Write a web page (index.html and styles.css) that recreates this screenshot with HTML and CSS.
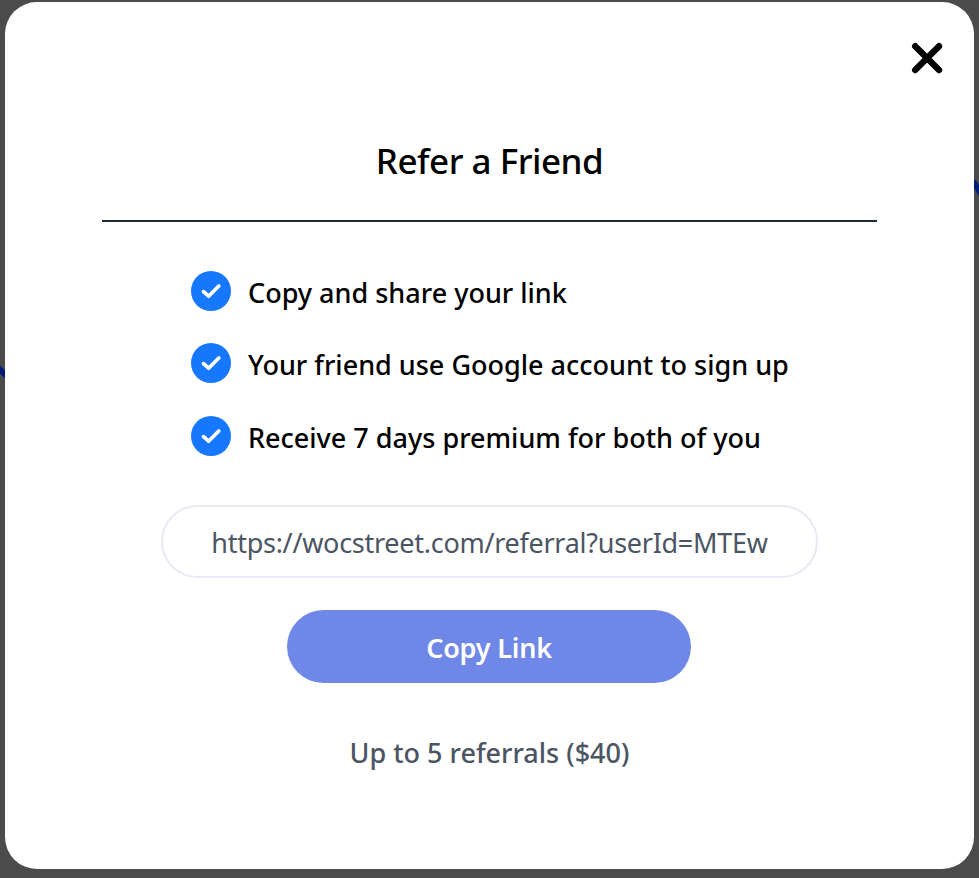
FILE: index.html
```html
<!DOCTYPE html>
<html lang="en">
<head>
<meta charset="utf-8">
<title>Refer a Friend</title>
<link rel="stylesheet" href="styles.css">
</head>
<body>
<svg class="backdrop" viewBox="0 0 979 878" aria-hidden="true">
  <path d="M0 0H979V4H0zM0 0H6V21H0z" fill="#4a4c4b"/>
  <path d="M-3 367L8 377M973 181L983 197" stroke="#001b78" stroke-width="6"/>
</svg>
<main class="modal">
  <button class="close" aria-label="Close">
    <svg viewBox="0 0 32 32"><path d="M4.200 4.200L28 28M28 4.200L4.200 28"/></svg>
  </button>
  <h1 class="title"><span>Refer a Friend</span></h1>
  <ul class="steps">
    <li><svg class="check" viewBox="0 0 40 40"><circle cx="20" cy="20" r="20"/><path d="M12.500 20.600L17.600 25.200L27.800 15"/></svg><span>Copy and share your link</span></li>
    <li><svg class="check" viewBox="0 0 40 40"><circle cx="20" cy="20" r="20"/><path d="M12.500 20.600L17.600 25.200L27.800 15"/></svg><span>Your friend use Google account to sign up</span></li>
    <li><svg class="check" viewBox="0 0 40 40"><circle cx="20" cy="20" r="20"/><path d="M12.500 20.600L17.600 25.200L27.800 15"/></svg><span>Receive 7 days premium for both of you</span></li>
  </ul>
  <div class="link"><span>https://wocstreet.com/referral?userId=MTEw</span></div>
  <button class="copy"><span>Copy Link</span></button>
  <p class="limit"><span>Up to 5 referrals ($40)</span></p>
</main>
</body>
</html>
```

FILE: styles.css
```css
* { box-sizing: border-box; }
body {
  margin: 0;
  height: 878px;
  padding: 2px 5px 9px;
  overflow: hidden;
  background: #4b4b4b;
  font-family: "Noto Sans", "Open Sans", sans-serif;
  font-size: 27px;
  font-weight: 500;
  line-height: 40px;
  color: #000;
}
button { border: 0; padding: 0; font: inherit; }
span { white-space: nowrap; }
.backdrop { position: absolute; left: 0; top: 0; width: 979px; height: 878px; }
.modal {
  position: relative;
  display: flex;
  flex-direction: column;
  align-items: center;
  height: 867px;
  padding-top: 139px;
  background: #fff;
  border-radius: 32px;
}
.close {
  position: absolute;
  right: 31px;
  top: 40px;
  width: 32px;
  height: 32px;
  background: none;
}
.close svg { display: block; fill: none; stroke: #000; stroke-width: 6.4; stroke-linecap: round; }
.title {
  width: 775px;
  height: 81px;
  margin: 0;
  border-bottom: 2px solid #1f2937;
  font-size: 35px;
  font-weight: 500;
  line-height: 40px;
  letter-spacing: -0.5px;
  text-align: center;
}
.steps {
  width: 597px;
  height: 185px;
  margin: 49px 0 0;
  padding: 0;
  display: grid;
  grid-template-rows: 72px 73px 40px;
  list-style: none;
}
.steps li { display: flex; align-items: flex-start; gap: 17px; }
.steps span { padding-top: 2px; }
.check { flex: none; width: 40px; height: 40px; }
.check circle { fill: #1677ff; }
.check path { fill: none; stroke: #fff; stroke-width: 3.7; stroke-linecap: round; stroke-linejoin: round; }
.link {
  width: 657px;
  height: 73px;
  margin-top: 49px;
  padding-top: 16px;
  border: 2px solid #e9e8f5;
  border-radius: 37px;
  font-weight: 400;
  letter-spacing: -0.27px;
  text-align: center;
  color: #4b5563;
}
.copy {
  width: 404px;
  height: 73px;
  margin: 32px 1px 0 0;
  padding-top: 3px;
  border-radius: 37px;
  background: #6f87e7;
  color: #fff;
  font-weight: 600;
  letter-spacing: -0.2px;
}
.limit { margin: 50px 0 0; color: #4b5563; }
```
